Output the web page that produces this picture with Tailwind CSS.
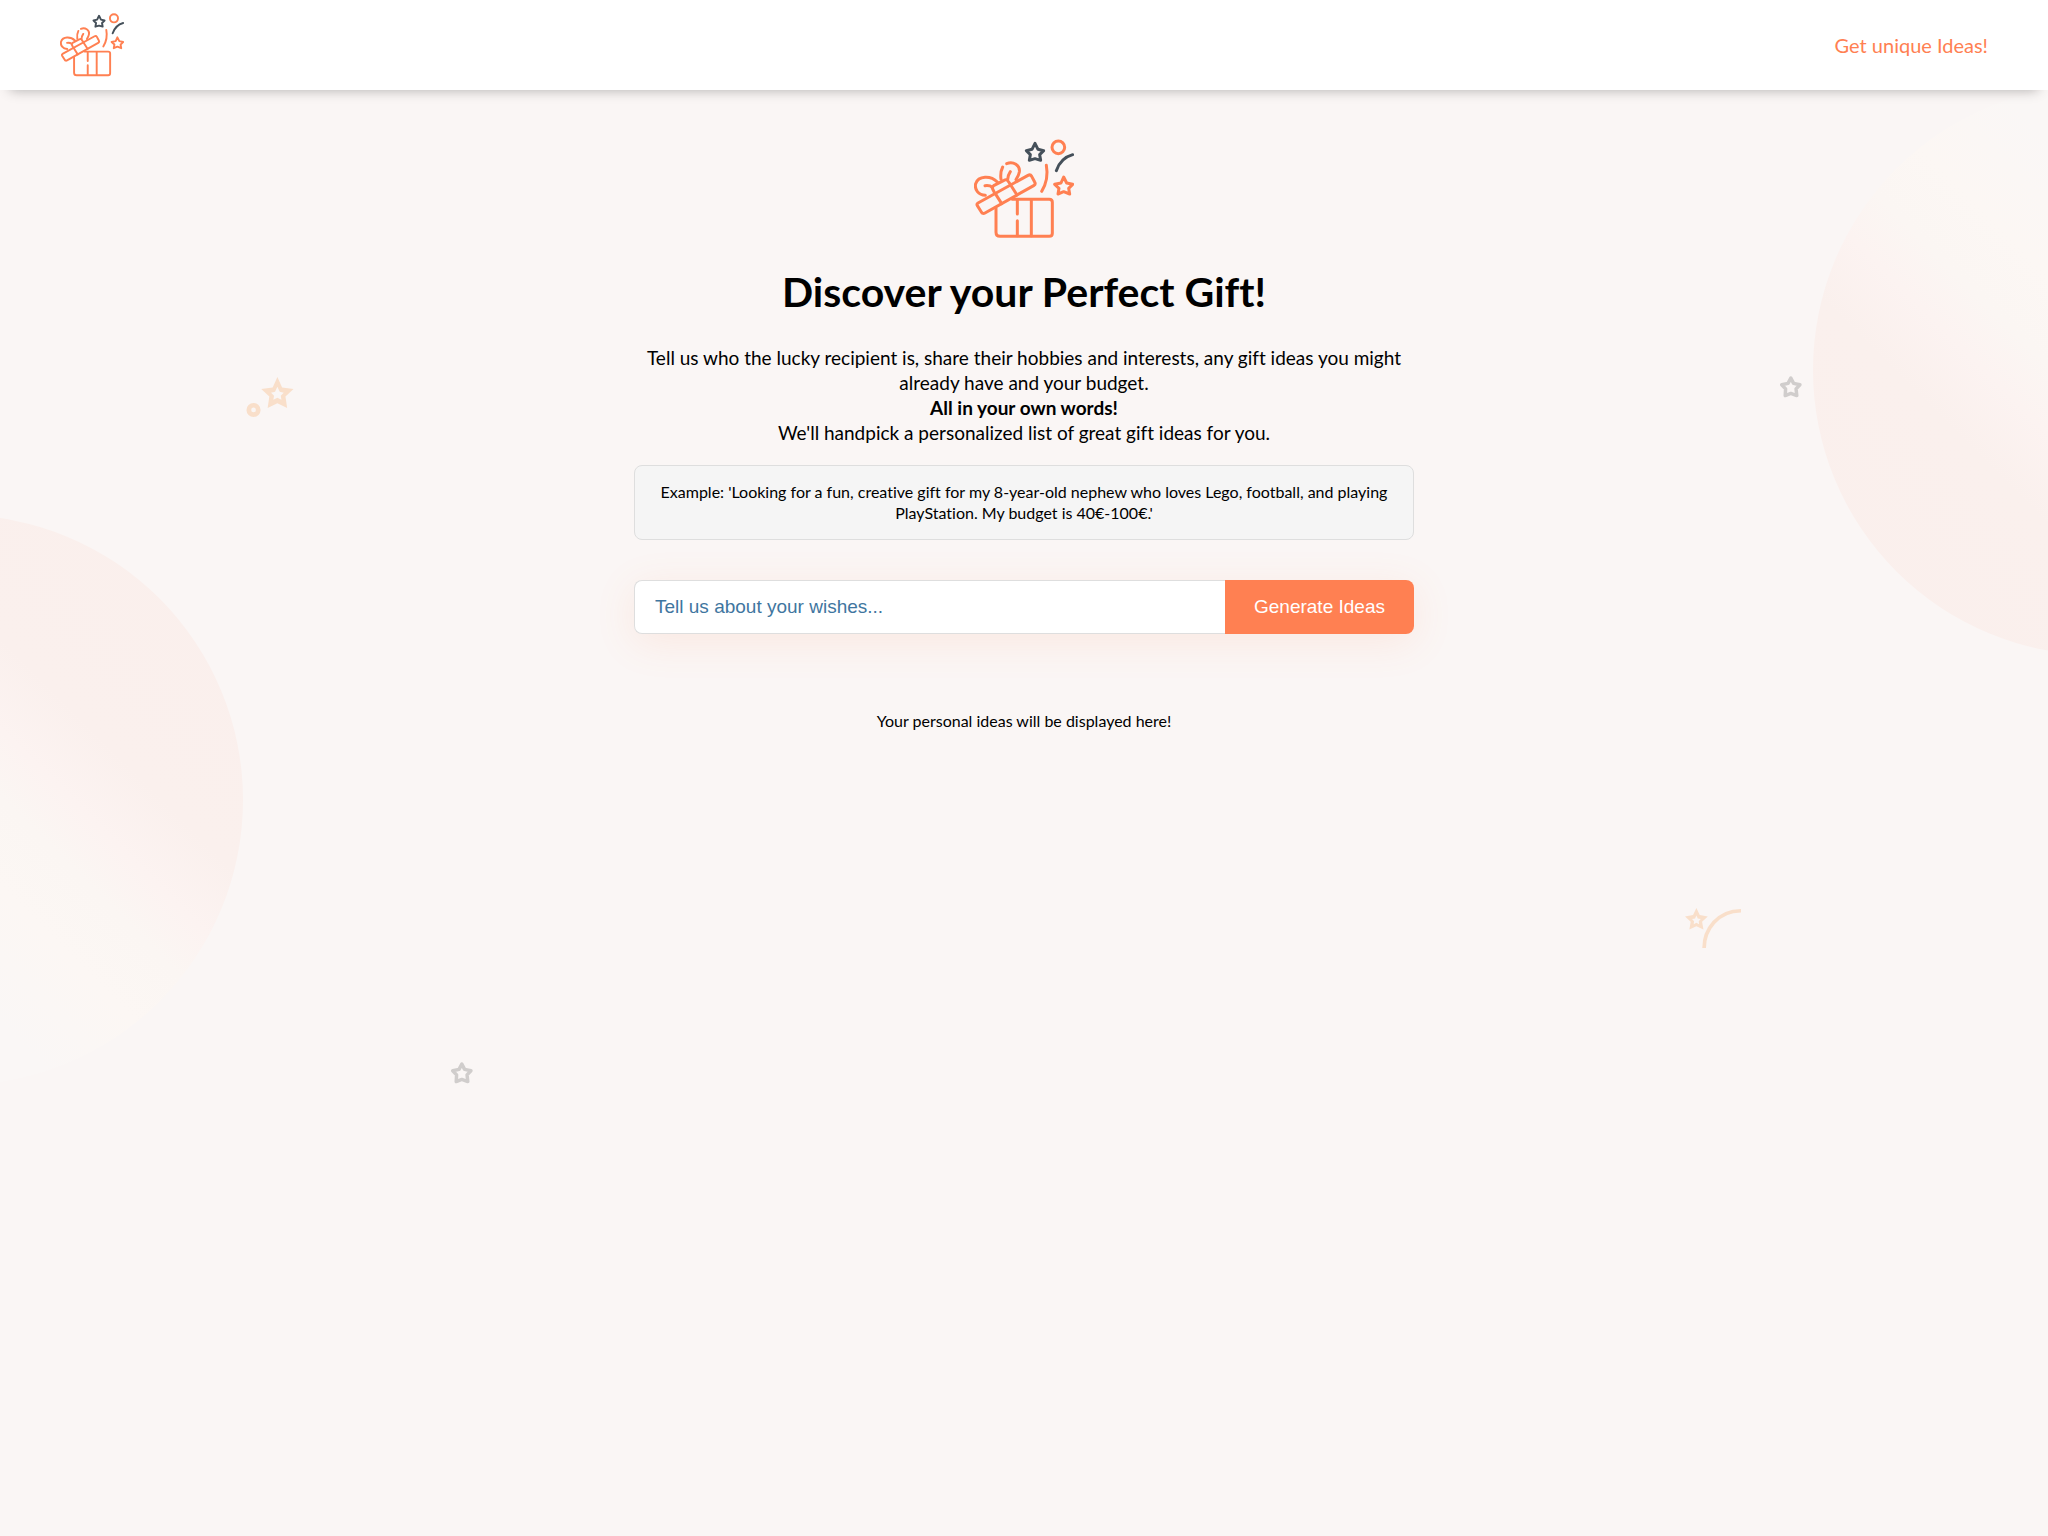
<!DOCTYPE html>
<html lang="en">
<head>
<meta charset="utf-8">
<meta name="viewport" content="width=device-width, initial-scale=1">
<title>Discover your Perfect Gift!</title>
<script src="https://cdn.jsdelivr.net/npm/@tailwindcss/browser@4"></script>
</head>
<body class="relative min-h-screen overflow-x-hidden bg-[#faf6f5] font-['Lato',sans-serif] text-black [font-variant-ligatures:none]">

<!-- Shared icon shapes -->
<svg class="hidden" aria-hidden="true">
  <symbol id="gift" viewBox="42 42 300 300">
    <g fill="none" stroke="#ff8052" stroke-width="9" stroke-linecap="round" stroke-linejoin="round">
      <path d="M157 223H268Q277 223 277 232V325Q277 334 268 334H120Q108 334 108 322V249"/>
      <path d="M172 226V267M172 287V332M214 226V332"/>
      <path d="M54 234L204 151Q211 147 215 154L224 171Q228 178 221 182L75 264Q68 268 64 261L52 242Q49 237 54 234Z"/>
      <path d="M106 206L125 236M152 180L171 210"/>
      <path d="M103 202L98 192Q95 186 101 182L132 166Q140 161 144 168L151 178"/>
      <path d="M75 182Q89 180 97 187M112 171C92 151 55 152 47 176C43 194 55 210 76 211"/>
      <path d="M151 140Q144 150 143 164M128 126Q120 142 123 163M140 116C160 108 181 121 178 141Q176 152 168 164"/>
      <path d="M259 121Q267 164 245 199"/>
      <circle cx="295" cy="67" r="19"/>
      <path d="M311 156L320 174L338 178L326 190L329 207L311 200L294 207L297 190L284 178L303 174Z"/>
    </g>
    <g fill="none" stroke="#45505a" stroke-width="9" stroke-linecap="round" stroke-linejoin="round">
      <path d="M225 55L234 73L251 77L239 89L242 106L225 101L208 106L211 89L199 77L216 73Z"/>
      <path d="M289 137Q302 99 338 89"/>
    </g>
  </symbol>
  <symbol id="star" viewBox="35 37 63 63">
    <path d="M66 43L74 58L92 62L81 74L83 93L66 87L50 93L51 74L40 62L58 58Z" fill="none" stroke="#d0cdcc" stroke-width="10" stroke-linejoin="round"/>
  </symbol>
</svg>

<!-- Background decoration -->
<div class="pointer-events-none absolute inset-0 -z-10 overflow-hidden" aria-hidden="true">
  <div class="absolute top-[515px] -left-[327px] size-[570px] rounded-full bg-[linear-gradient(45deg,#faf7f6_34%,#fcf7f4_46%,#fbf6f3_54%,#fcf3f1_60%,#faf0ed_68%,#faefec_100%)]"></div>
  <div class="absolute top-[85px] -right-[335px] size-[570px] rounded-full bg-[linear-gradient(225deg,#faf7f6_34%,#fcf7f4_46%,#fbf6f3_54%,#fcf3f1_60%,#faf0ed_68%,#faefec_100%)]"></div>
  <svg class="absolute top-[377px] left-[12%] h-10 w-12" viewBox="48 52 140 119" fill="none">
    <path fill="#f9dfca" fill-rule="evenodd" d="M140 52L154 83L188 88L164 110L169 144L140 130L111 144L116 110L92 88L126 83ZM140 81L133 96L121 99L130 108L128 120L140 114L152 120L150 108L159 99L147 96Z"/>
    <circle cx="69" cy="150" r="14" stroke="#f9dfca" stroke-width="14"/>
  </svg>
  <svg class="absolute top-[908px] right-[15%] h-10 w-14" viewBox="43 55 167 119" fill="none">
    <path fill="#f9dfca" fill-rule="evenodd" d="M77 55L87 76L111 80L94 96L98 119L77 109L56 119L60 96L43 80L67 76ZM77 77L73 86L64 88L70 94L69 103L77 99L85 103L84 94L90 88L81 86Z"/>
    <path d="M100 174C100 120 140 63 210 63" stroke="#f9dfca" stroke-width="11"/>
  </svg>
  <svg class="absolute top-[1062px] left-[22%] size-[22px]"><use href="#star"/></svg>
  <svg class="absolute top-[376px] right-[12%] size-[22px]"><use href="#star"/></svg>
</div>

<header class="flex h-[90px] items-center justify-between bg-white px-15 shadow-[0_10px_12px_-10px_rgba(0,0,0,0.3)]">
  <a href="#" aria-label="Home"><svg class="size-16"><use href="#gift"/></svg></a>
  <nav><a href="#ideas" class="text-xl text-[#ff8052]">Get unique Ideas!</a></nav>
</header>

<main class="mx-auto flex w-full max-w-[780px] flex-col items-center pt-[49px] text-center">
  <svg class="size-[100px]" aria-hidden="true"><use href="#gift"/></svg>
  <h1 class="mt-7 text-[41px] leading-[50px] font-bold">Discover your Perfect Gift!</h1>
  <p class="mt-7 text-[19px] leading-[25px]">Tell us who the lucky recipient is, share their hobbies and interests, any gift ideas you might already have and your budget.<br><strong class="font-bold">All in your own words!</strong><br>We'll handpick a personalized list of great gift ideas for you.</p>
  <p class="mt-5 w-full rounded-lg border border-[#dedede] bg-[#f5f5f5] px-6 pt-[15px] pb-4 text-base leading-[21px]">Example: 'Looking for a fun, creative gift for my 8-year-old nephew who loves Lego, football, and playing PlayStation. My budget is 40€-100€.'</p>
  <form class="mt-10 flex h-[54px] w-full rounded-lg font-['Liberation_Sans',Arial,sans-serif] text-[19px] shadow-[0_8px_40px_rgba(255,128,82,0.12)]">
    <input type="text" aria-label="Your wishes" placeholder="Tell us about your wishes..." class="min-w-0 flex-1 rounded-l-lg border border-r-0 border-[#dedede] bg-white px-5 outline-none placeholder:text-[#3f76a0]">
    <button type="submit" class="w-[189px] rounded-r-lg bg-[#ff8052] text-white">Generate Ideas</button>
  </form>
  <p id="ideas" class="mt-[75px] text-base leading-6">Your personal ideas will be displayed here!</p>
</main>
</body>
</html>
